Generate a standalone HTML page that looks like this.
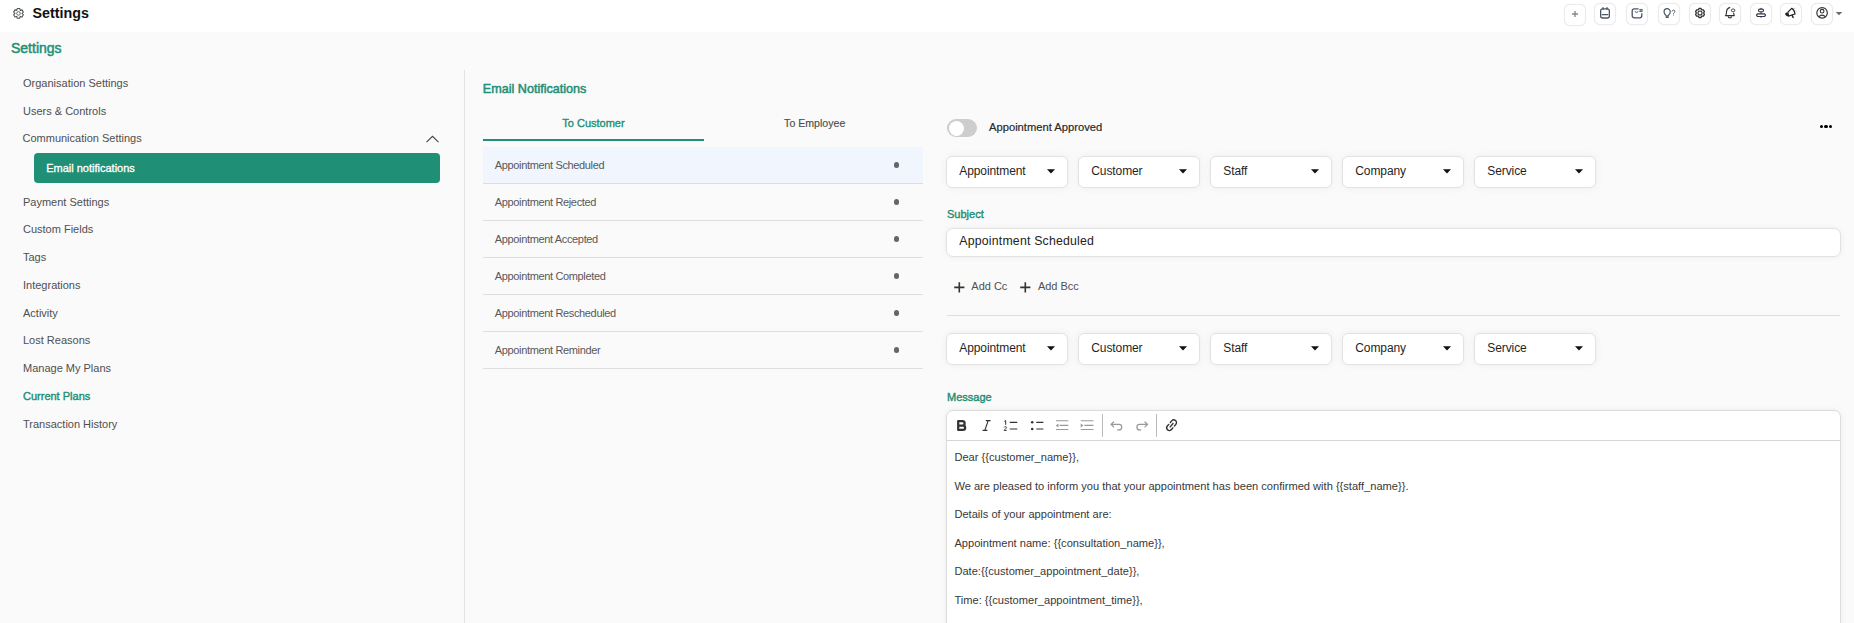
<!DOCTYPE html>
<html><head><meta charset="utf-8"><title>Settings</title>
<style>
html,body{margin:0;padding:0;width:1854px;height:623px;overflow:hidden;background:#fafafa;font-family:"Liberation Sans",sans-serif}
.t{position:absolute;white-space:nowrap}
.r{position:absolute;display:block}
</style></head><body>
<div class="r" style="left:0px;top:0px;width:1854px;height:32px;background:#fff"></div>
<svg class="r" style="left:0;top:0" width="40" height="32" viewBox="0 0 40 32"><path d="M16.75 10.37 L17.21 8.57 L19.79 8.57 L20.25 10.37 L22.04 9.86 L23.33 12.11 L22.00 13.40 L23.33 14.69 L22.04 16.94 L20.25 16.43 L19.79 18.23 L17.21 18.23 L16.75 16.43 L14.96 16.94 L13.67 14.69 L15.00 13.40 L13.67 12.11 L14.96 9.86Z" stroke="#4b5552" stroke-width="1.1" fill="none" stroke-linejoin="round"/><circle cx="18.5" cy="13.4" r="1.8" stroke="#4b5552" stroke-width=".85" fill="none"/></svg>
<div class="t" style="left:32.5px;top:6px;font-size:14.3px;line-height:14.3px;color:#111;font-weight:700">Settings</div>
<div class="r" style="left:1563.5px;top:3.5px;width:22px;height:22px;background:#fff;border:1.5px solid #ebebeb;border-radius:6px;box-sizing:border-box;box-shadow:0 0 1px rgba(0,0,0,.1)"></div>
<div class="r" style="left:1593.5px;top:2.5px;width:22px;height:22px;background:#fff;border:1.5px solid #ebebeb;border-radius:6px;box-sizing:border-box;box-shadow:0 0 1px rgba(0,0,0,.1)"></div>
<div class="r" style="left:1625.5px;top:2.5px;width:22px;height:22px;background:#fff;border:1.5px solid #ebebeb;border-radius:6px;box-sizing:border-box;box-shadow:0 0 1px rgba(0,0,0,.1)"></div>
<div class="r" style="left:1657.5px;top:2.5px;width:22px;height:22px;background:#fff;border:1.5px solid #ebebeb;border-radius:6px;box-sizing:border-box;box-shadow:0 0 1px rgba(0,0,0,.1)"></div>
<div class="r" style="left:1688.5px;top:2.5px;width:22px;height:22px;background:#fff;border:1.5px solid #ebebeb;border-radius:6px;box-sizing:border-box;box-shadow:0 0 1px rgba(0,0,0,.1)"></div>
<div class="r" style="left:1718.5px;top:2.5px;width:22px;height:22px;background:#fff;border:1.5px solid #ebebeb;border-radius:6px;box-sizing:border-box;box-shadow:0 0 1px rgba(0,0,0,.1)"></div>
<div class="r" style="left:1749.5px;top:2.5px;width:22px;height:22px;background:#fff;border:1.5px solid #ebebeb;border-radius:6px;box-sizing:border-box;box-shadow:0 0 1px rgba(0,0,0,.1)"></div>
<div class="r" style="left:1779.5px;top:2.5px;width:22px;height:22px;background:#fff;border:1.5px solid #ebebeb;border-radius:6px;box-sizing:border-box;box-shadow:0 0 1px rgba(0,0,0,.1)"></div>
<div class="r" style="left:1810.5px;top:2.5px;width:22px;height:22px;background:#fff;border:1.5px solid #ebebeb;border-radius:6px;box-sizing:border-box;box-shadow:0 0 1px rgba(0,0,0,.1)"></div>
<svg class="r" style="left:1564px;top:4px" width="21" height="21" viewBox="0 0 21 21"><path d="M11 7v6M8 10h6" stroke="#8a8a8a" stroke-width="1.4"/></svg>
<svg class="r" style="left:1594px;top:3px" width="21" height="21" viewBox="0 0 21 21"><rect x="6.65" y="5.8" width="8.7" height="9.2" rx="2" stroke="#4b5563" stroke-width="1.3" fill="none"/><path d="M9 6.3V4.6M13 6.3V4.6M8.3 11.7h5.4" stroke="#4b5563" stroke-width="1.3" stroke-linecap="round"/></svg>
<svg class="r" style="left:1626px;top:3px" width="21" height="21" viewBox="0 0 21 21"><path d="M12.6 5.8H8.3a2.1 2.1 0 0 0-2.1 2.1v4.9a2.1 2.1 0 0 0 2.1 2.1h5.4a2.1 2.1 0 0 0 2.1-2.1V10.3" stroke="#4b5563" stroke-width="1.3" fill="none"/><path d="M8.8 8.6q1.8 1.5 3.5 0" stroke="#4b5563" stroke-width="1" fill="none"/><path d="M14.3 5.9v3.2M15.8 5.9v3.2M13.2 6.7h3.6M13.2 8.3h3.6" stroke="#4b5563" stroke-width=".75"/></svg>
<svg class="r" style="left:1658px;top:3px" width="21" height="21" viewBox="0 0 21 21"><path d="M8 12.4c-1.2-.9-1.95-2-1.95-3.6a3.1 3.1 0 0 1 6.2 0c0 1.6-.75 2.7-1.95 3.6v.7H8z" stroke="#4b5563" stroke-width="1.2" fill="none" stroke-linejoin="round"/><path d="M8.2 14.3h2" stroke="#4b5563" stroke-width="1.2" stroke-linecap="round"/><path d="M14.1 8.5a1.4 1.4 0 1 1 1.9 1.3c-.35.2-.5.45-.5.9v.4" stroke="#5b6270" stroke-width="1" fill="none"/><circle cx="15.5" cy="12.1" r=".5" fill="#5b6270"/></svg>
<svg class="r" style="left:1689px;top:3px" width="21" height="21" viewBox="0 0 21 21"><path d="M9.20 6.88 L9.97 5.52 L12.03 5.52 L12.80 6.88 L14.36 6.86 L15.40 8.66 L14.60 10.00 L15.40 11.34 L14.36 13.14 L12.80 13.12 L12.03 14.48 L9.97 14.48 L9.20 13.12 L7.64 13.14 L6.60 11.34 L7.40 10.00 L6.60 8.66 L7.64 6.86Z" stroke="#333" stroke-width="1.3" fill="none" stroke-linejoin="round"/><circle cx="11" cy="10" r="2.05" stroke="#333" stroke-width="1.1" fill="none"/></svg>
<svg class="r" style="left:1719px;top:3px" width="21" height="21" viewBox="0 0 21 21"><path d="M6.4 12.6h8.9M6.7 12.4c.8-.9.8-1.9.8-3.4.1-2.5 1.6-4 3.3-4.4M14.6 10c.2 1.2.4 1.8.7 2.4" stroke="#333" stroke-width="1.15" fill="none" stroke-linecap="round" stroke-linejoin="round"/><path d="M9.2 13.3a1.65 1.65 0 0 0 3.3 0" stroke="#333" stroke-width="1.15" fill="none"/><rect x="12.4" y="6.1" width="3.4" height="2.5" rx="1.2" stroke="#333" stroke-width="1" fill="none"/></svg>
<svg class="r" style="left:1750px;top:3px" width="21" height="21" viewBox="0 0 21 21"><rect x="8.5" y="6.1" width="5" height="2.7" rx="1.2" stroke="#2d3748" stroke-width="1.1" fill="none"/><path d="M7.4 10.9h7.2l.9 1.3-.9 1.3H7.4l-.9-1.3z" stroke="#2d3748" stroke-width="1.15" fill="none" stroke-linejoin="round"/><path d="M11 4.9v1.2M11 8.8v2.1M11 13.5v1.2" stroke="#2d3748" stroke-width="1"/></svg>
<svg class="r" style="left:1780px;top:3px" width="21" height="21" viewBox="0 0 21 21"><path d="M7.9 9.1L11.7 5.4c1.5.6 2.8 2.9 3.3 5.6L8.4 13.2z" stroke="#222" stroke-width="1.25" fill="none" stroke-linejoin="round"/><rect x="5.6" y="9.5" width="2.6" height="3.8" rx="1" transform="rotate(-40 6.9 11.4)" fill="#222"/><path d="M12.2 12.4l.9 2.1" stroke="#222" stroke-width="1.4" stroke-linecap="round"/><path d="M14 4.8l.4.9M15.8 7.9l.8.3" stroke="#888" stroke-width=".8"/></svg>
<svg class="r" style="left:1811px;top:3px" width="21" height="21" viewBox="0 0 21 21"><circle cx="11.1" cy="9.9" r="5.25" stroke="#333" stroke-width="1.2" fill="none"/><circle cx="11.1" cy="8.2" r="1.85" stroke="#333" stroke-width="1.1" fill="none"/><path d="M7.6 13.9q3.5-3.4 7 0" stroke="#333" stroke-width="1.1" fill="none"/></svg>
<svg class="r" style="left:1835px;top:11px" width="8" height="5" viewBox="0 0 8 5"><path d="M0.7 1h6.6L4 4.2z" fill="#6a6a6a"/></svg>
<div class="r" style="left:0px;top:32px;width:1854px;height:591px;background:#fafafa"></div>
<div class="t" style="left:11px;top:41px;font-size:14px;line-height:14px;color:#1f8f76;-webkit-text-stroke:0.5px #1f8f76">Settings</div>
<div class="t" style="left:23px;top:78px;font-size:11px;line-height:11px;color:#4f4f4f;">Organisation Settings</div>
<div class="t" style="left:23px;top:106px;font-size:11px;line-height:11px;color:#4f4f4f;">Users &amp; Controls</div>
<div class="t" style="left:22.5px;top:133px;font-size:11px;line-height:11px;color:#4f4f4f;">Communication Settings</div>
<svg class="r" style="left:425px;top:134px" width="15" height="10" viewBox="0 0 15 10"><path d="M1.5 8.2L7.5 2.3l6 5.9" stroke="#444" stroke-width="1.1" fill="none"/></svg>
<div class="r" style="left:34px;top:153px;width:406px;height:30px;background:#1f8f76;border-radius:4px"></div>
<div class="t" style="left:46.2px;top:163px;font-size:11px;line-height:11px;color:#fff;-webkit-text-stroke:0.3px #fff">Email notifications</div>
<div class="t" style="left:23px;top:197px;font-size:11px;line-height:11px;color:#4f4f4f;">Payment Settings</div>
<div class="t" style="left:23px;top:224px;font-size:11px;line-height:11px;color:#4f4f4f;">Custom Fields</div>
<div class="t" style="left:23px;top:252px;font-size:11px;line-height:11px;color:#4f4f4f;">Tags</div>
<div class="t" style="left:23px;top:280px;font-size:11px;line-height:11px;color:#4f4f4f;">Integrations</div>
<div class="t" style="left:23px;top:308px;font-size:11px;line-height:11px;color:#4f4f4f;">Activity</div>
<div class="t" style="left:23px;top:335px;font-size:11px;line-height:11px;color:#4f4f4f;">Lost Reasons</div>
<div class="t" style="left:23px;top:363px;font-size:11px;line-height:11px;color:#4f4f4f;">Manage My Plans</div>
<div class="t" style="left:23px;top:391px;font-size:11px;line-height:11px;color:#1f8f76;-webkit-text-stroke:0.4px #1f8f76">Current Plans</div>
<div class="t" style="left:23px;top:419px;font-size:11px;line-height:11px;color:#4f4f4f;">Transaction History</div>
<div class="r" style="left:464px;top:70px;width:1px;height:553px;background:#e3e3e3"></div>
<div class="t" style="left:482.8px;top:83px;font-size:12.6px;line-height:12.6px;color:#1f8f76;-webkit-text-stroke:0.5px #1f8f76">Email Notifications</div>
<div class="t" style="left:562.3px;top:118px;font-size:11px;line-height:11px;color:#1f8f76;-webkit-text-stroke:0.35px #1f8f76">To Customer</div>
<div class="t" style="left:784.1px;top:118px;font-size:10.6px;line-height:10.6px;color:#4e4e4e;-webkit-text-stroke:0.15px #4e4e4e">To Employee</div>
<div class="r" style="left:483px;top:139px;width:221px;height:2px;background:#1f8f76"></div>
<div class="r" style="left:483px;top:147px;width:440px;height:36px;background:#f0f5fe"></div>
<div class="t" style="left:494.8px;top:160px;font-size:11px;line-height:11px;color:#585858;letter-spacing:-0.35px">Appointment Scheduled</div>
<div class="r" style="left:483px;top:183px;width:440px;height:1px;background:#dedede"></div>
<div class="r" style="left:893.7px;top:162.4px;width:5.6px;height:5.6px;background:#666;border-radius:50%"></div>
<div class="t" style="left:494.8px;top:197px;font-size:11px;line-height:11px;color:#585858;letter-spacing:-0.35px">Appointment Rejected</div>
<div class="r" style="left:483px;top:220px;width:440px;height:1px;background:#dedede"></div>
<div class="r" style="left:893.7px;top:199.4px;width:5.6px;height:5.6px;background:#666;border-radius:50%"></div>
<div class="t" style="left:494.8px;top:234px;font-size:11px;line-height:11px;color:#585858;letter-spacing:-0.35px">Appointment Accepted</div>
<div class="r" style="left:483px;top:257px;width:440px;height:1px;background:#dedede"></div>
<div class="r" style="left:893.7px;top:236.4px;width:5.6px;height:5.6px;background:#666;border-radius:50%"></div>
<div class="t" style="left:494.8px;top:271px;font-size:11px;line-height:11px;color:#585858;letter-spacing:-0.35px">Appointment Completed</div>
<div class="r" style="left:483px;top:294px;width:440px;height:1px;background:#dedede"></div>
<div class="r" style="left:893.7px;top:273.4px;width:5.6px;height:5.6px;background:#666;border-radius:50%"></div>
<div class="t" style="left:494.8px;top:308px;font-size:11px;line-height:11px;color:#585858;letter-spacing:-0.35px">Appointment Rescheduled</div>
<div class="r" style="left:483px;top:331px;width:440px;height:1px;background:#dedede"></div>
<div class="r" style="left:893.7px;top:310.4px;width:5.6px;height:5.6px;background:#666;border-radius:50%"></div>
<div class="t" style="left:494.8px;top:345px;font-size:11px;line-height:11px;color:#585858;letter-spacing:-0.35px">Appointment Reminder</div>
<div class="r" style="left:483px;top:368px;width:440px;height:1px;background:#dedede"></div>
<div class="r" style="left:893.7px;top:347.4px;width:5.6px;height:5.6px;background:#666;border-radius:50%"></div>
<div class="r" style="left:947px;top:119.3px;width:30px;height:17.6px;background:#cdcdcd;border-radius:9px"></div>
<div class="r" style="left:948.6px;top:120.6px;width:15.2px;height:15.2px;background:#fff;border-radius:50%"></div>
<div class="t" style="left:989px;top:122px;font-size:11.2px;line-height:11.2px;color:#2a2a2a;-webkit-text-stroke:0.2px #2a2a2a">Appointment Approved</div>
<div class="r" style="left:1819.9px;top:125.3px;width:3.2px;height:3.2px;background:#000;border-radius:50%"></div>
<div class="r" style="left:1824.4px;top:125.3px;width:3.2px;height:3.2px;background:#000;border-radius:50%"></div>
<div class="r" style="left:1828.9px;top:125.3px;width:3.2px;height:3.2px;background:#000;border-radius:50%"></div>
<div class="r" style="left:946px;top:156px;width:122px;height:32px;background:#fff;border:1px solid #e2e2e2;border-radius:6px;box-sizing:border-box;box-shadow:0 0 8px rgba(0,0,0,.055)"></div>
<div class="t" style="left:959.3px;top:165px;font-size:12px;line-height:12px;color:#1f1f1f;letter-spacing:-0.1px">Appointment</div>
<svg class="r" style="left:1047px;top:168.9px" width="8" height="5" viewBox="0 0 8 5"><path d="M0 0.3h8L4 4.6z" fill="#111"/></svg>
<div class="r" style="left:1078px;top:156px;width:122px;height:32px;background:#fff;border:1px solid #e2e2e2;border-radius:6px;box-sizing:border-box;box-shadow:0 0 8px rgba(0,0,0,.055)"></div>
<div class="t" style="left:1091.3px;top:165px;font-size:12px;line-height:12px;color:#1f1f1f;letter-spacing:-0.1px">Customer</div>
<svg class="r" style="left:1179px;top:168.9px" width="8" height="5" viewBox="0 0 8 5"><path d="M0 0.3h8L4 4.6z" fill="#111"/></svg>
<div class="r" style="left:1210px;top:156px;width:122px;height:32px;background:#fff;border:1px solid #e2e2e2;border-radius:6px;box-sizing:border-box;box-shadow:0 0 8px rgba(0,0,0,.055)"></div>
<div class="t" style="left:1223.3px;top:165px;font-size:12px;line-height:12px;color:#1f1f1f;letter-spacing:-0.1px">Staff</div>
<svg class="r" style="left:1311px;top:168.9px" width="8" height="5" viewBox="0 0 8 5"><path d="M0 0.3h8L4 4.6z" fill="#111"/></svg>
<div class="r" style="left:1342px;top:156px;width:122px;height:32px;background:#fff;border:1px solid #e2e2e2;border-radius:6px;box-sizing:border-box;box-shadow:0 0 8px rgba(0,0,0,.055)"></div>
<div class="t" style="left:1355.3px;top:165px;font-size:12px;line-height:12px;color:#1f1f1f;letter-spacing:-0.1px">Company</div>
<svg class="r" style="left:1443px;top:168.9px" width="8" height="5" viewBox="0 0 8 5"><path d="M0 0.3h8L4 4.6z" fill="#111"/></svg>
<div class="r" style="left:1474px;top:156px;width:122px;height:32px;background:#fff;border:1px solid #e2e2e2;border-radius:6px;box-sizing:border-box;box-shadow:0 0 8px rgba(0,0,0,.055)"></div>
<div class="t" style="left:1487.3px;top:165px;font-size:12px;line-height:12px;color:#1f1f1f;letter-spacing:-0.1px">Service</div>
<svg class="r" style="left:1575px;top:168.9px" width="8" height="5" viewBox="0 0 8 5"><path d="M0 0.3h8L4 4.6z" fill="#111"/></svg>
<div class="t" style="left:947px;top:209px;font-size:11px;line-height:11px;color:#1f8f76;-webkit-text-stroke:0.4px #1f8f76">Subject</div>
<div class="r" style="left:946px;top:228px;width:895px;height:29px;background:#fff;border:1px solid #e2e2e2;border-radius:7px;box-sizing:border-box;box-shadow:0 0 6px rgba(0,0,0,.06)"></div>
<div class="t" style="left:959.3px;top:235px;font-size:12.3px;line-height:12.3px;color:#222;letter-spacing:0.2px">Appointment Scheduled</div>
<svg class="r" style="left:953.6px;top:282.3px" width="11" height="11" viewBox="0 0 11 11"><path d="M5.3 0.3v10.2M0.2 5.4h10.2" stroke="#333" stroke-width="1.6"/></svg>
<svg class="r" style="left:1020px;top:282.3px" width="11" height="11" viewBox="0 0 11 11"><path d="M5.3 0.3v10.2M0.2 5.4h10.2" stroke="#333" stroke-width="1.6"/></svg>
<div class="t" style="left:971.3px;top:281px;font-size:11px;line-height:11px;color:#505050;">Add Cc</div>
<div class="t" style="left:1037.9px;top:281px;font-size:11px;line-height:11px;color:#505050;">Add Bcc</div>
<div class="r" style="left:947px;top:315px;width:893px;height:1px;background:#dddddd"></div>
<div class="r" style="left:946px;top:333px;width:122px;height:32px;background:#fff;border:1px solid #e2e2e2;border-radius:6px;box-sizing:border-box;box-shadow:0 0 8px rgba(0,0,0,.055)"></div>
<div class="t" style="left:959.3px;top:342px;font-size:12px;line-height:12px;color:#1f1f1f;letter-spacing:-0.1px">Appointment</div>
<svg class="r" style="left:1047px;top:345.9px" width="8" height="5" viewBox="0 0 8 5"><path d="M0 0.3h8L4 4.6z" fill="#111"/></svg>
<div class="r" style="left:1078px;top:333px;width:122px;height:32px;background:#fff;border:1px solid #e2e2e2;border-radius:6px;box-sizing:border-box;box-shadow:0 0 8px rgba(0,0,0,.055)"></div>
<div class="t" style="left:1091.3px;top:342px;font-size:12px;line-height:12px;color:#1f1f1f;letter-spacing:-0.1px">Customer</div>
<svg class="r" style="left:1179px;top:345.9px" width="8" height="5" viewBox="0 0 8 5"><path d="M0 0.3h8L4 4.6z" fill="#111"/></svg>
<div class="r" style="left:1210px;top:333px;width:122px;height:32px;background:#fff;border:1px solid #e2e2e2;border-radius:6px;box-sizing:border-box;box-shadow:0 0 8px rgba(0,0,0,.055)"></div>
<div class="t" style="left:1223.3px;top:342px;font-size:12px;line-height:12px;color:#1f1f1f;letter-spacing:-0.1px">Staff</div>
<svg class="r" style="left:1311px;top:345.9px" width="8" height="5" viewBox="0 0 8 5"><path d="M0 0.3h8L4 4.6z" fill="#111"/></svg>
<div class="r" style="left:1342px;top:333px;width:122px;height:32px;background:#fff;border:1px solid #e2e2e2;border-radius:6px;box-sizing:border-box;box-shadow:0 0 8px rgba(0,0,0,.055)"></div>
<div class="t" style="left:1355.3px;top:342px;font-size:12px;line-height:12px;color:#1f1f1f;letter-spacing:-0.1px">Company</div>
<svg class="r" style="left:1443px;top:345.9px" width="8" height="5" viewBox="0 0 8 5"><path d="M0 0.3h8L4 4.6z" fill="#111"/></svg>
<div class="r" style="left:1474px;top:333px;width:122px;height:32px;background:#fff;border:1px solid #e2e2e2;border-radius:6px;box-sizing:border-box;box-shadow:0 0 8px rgba(0,0,0,.055)"></div>
<div class="t" style="left:1487.3px;top:342px;font-size:12px;line-height:12px;color:#1f1f1f;letter-spacing:-0.1px">Service</div>
<svg class="r" style="left:1575px;top:345.9px" width="8" height="5" viewBox="0 0 8 5"><path d="M0 0.3h8L4 4.6z" fill="#111"/></svg>
<div class="t" style="left:947px;top:392px;font-size:11px;line-height:11px;color:#1f8f76;-webkit-text-stroke:0.4px #1f8f76">Message</div>
<div class="r" style="left:946px;top:410px;width:895px;height:240px;background:#fff;border:1px solid #dcdcdc;border-radius:7px 7px 0 0;box-sizing:border-box;box-shadow:0 0 6px rgba(0,0,0,.06)"></div>
<div class="r" style="left:947px;top:440px;width:893px;height:1px;background:#d6d6d6"></div>
<svg class="r" style="left:947px;top:411px" width="240" height="29" viewBox="0 0 240 29">
<path d="M11.2 10.2h4.2a2.2 2.2 0 0 1 0 4.4h-4.2z M11.2 14.6h4.8a2.15 2.15 0 0 1 0 4.3h-4.8z" stroke="#333" stroke-width="2.25" fill="none" stroke-linejoin="round"/>
<path d="M38.8 9.6h4.8M35.6 19.4h4.8M41.2 9.6l-3.4 9.8" stroke="#333" stroke-width="1.15" fill="none"/>
<path d="M57.4 10.4l1.3-.9v4.3" stroke="#333" stroke-width="1" fill="none"/>
<path d="M57.1 16.4c.3-.6 .8-.8 1.3-.8s1 .3 1 .9c0 .8-1.4 1.8-2.3 2.9h2.5" stroke="#333" stroke-width="1" fill="none"/>
<path d="M62.8 11.3h7.5M62.8 18h7.5" stroke="#333" stroke-width="1.2"/>
<circle cx="85.2" cy="11.3" r="1.25" fill="#333"/><circle cx="85.2" cy="18" r="1.25" fill="#333"/>
<path d="M89.3 11.3h7.1M89.3 18h7.1" stroke="#333" stroke-width="1.2"/>
<path d="M109 9.7h12.3M112.6 14.4h8.7M109 18.5h12.3" stroke="#999" stroke-width="1.15"/><path d="M108.7 14.4l2.8-2v4z" fill="#999"/>
<path d="M133.8 9.7h12.7M137.4 14.4h9.1M133.8 18.5h12.7" stroke="#999" stroke-width="1.15"/><path d="M136.5 14.4l-2.8-2v4z" fill="#999"/>
<path d="M155.5 3v22.8" stroke="#bbb" stroke-width="1"/>
<path d="M164 13.4h8a2.75 2.75 0 0 1 0 5.5h-1.2M164 13.4l2.6-2.4M164 13.4l2.6 2.4" stroke="#999" stroke-width="1.2" fill="none" stroke-linecap="round" stroke-linejoin="round"/>
<g transform="matrix(-1 0 0 1 364.6 0)"><path d="M164 13.4h8a2.75 2.75 0 0 1 0 5.5h-1.2M164 13.4l2.6-2.4M164 13.4l2.6 2.4" stroke="#999" stroke-width="1.2" fill="none" stroke-linecap="round" stroke-linejoin="round"/></g>
<path d="M209.5 3v22.8" stroke="#bbb" stroke-width="1"/>
<g transform="translate(224.6 14.2) rotate(-50)"><path d="M-1.2 -2.7h-2.2a2.7 2.7 0 0 0 0 5.4h2.2M1.2 -2.7h2.2a2.7 2.7 0 0 1 0 5.4h-2.2M-2.2 0h4.4" stroke="#333" stroke-width="1.4" fill="none" stroke-linecap="round"/></g>
</svg>
<div class="t" style="left:954.4px;top:452px;font-size:11.1px;line-height:11.1px;color:#383838;">Dear {{customer_name}},</div>
<div class="t" style="left:954.4px;top:481px;font-size:11.1px;line-height:11.1px;color:#383838;">We are pleased to inform you that your appointment has been confirmed with {{staff_name}}.</div>
<div class="t" style="left:954.4px;top:509px;font-size:11.1px;line-height:11.1px;color:#383838;">Details of your appointment are:</div>
<div class="t" style="left:954.4px;top:538px;font-size:11.1px;line-height:11.1px;color:#383838;">Appointment name: {{consultation_name}},</div>
<div class="t" style="left:954.4px;top:566px;font-size:11.1px;line-height:11.1px;color:#383838;">Date:{{customer_appointment_date}},</div>
<div class="t" style="left:954.4px;top:595px;font-size:11.1px;line-height:11.1px;color:#383838;">Time: {{customer_appointment_time}},</div>
</body></html>
